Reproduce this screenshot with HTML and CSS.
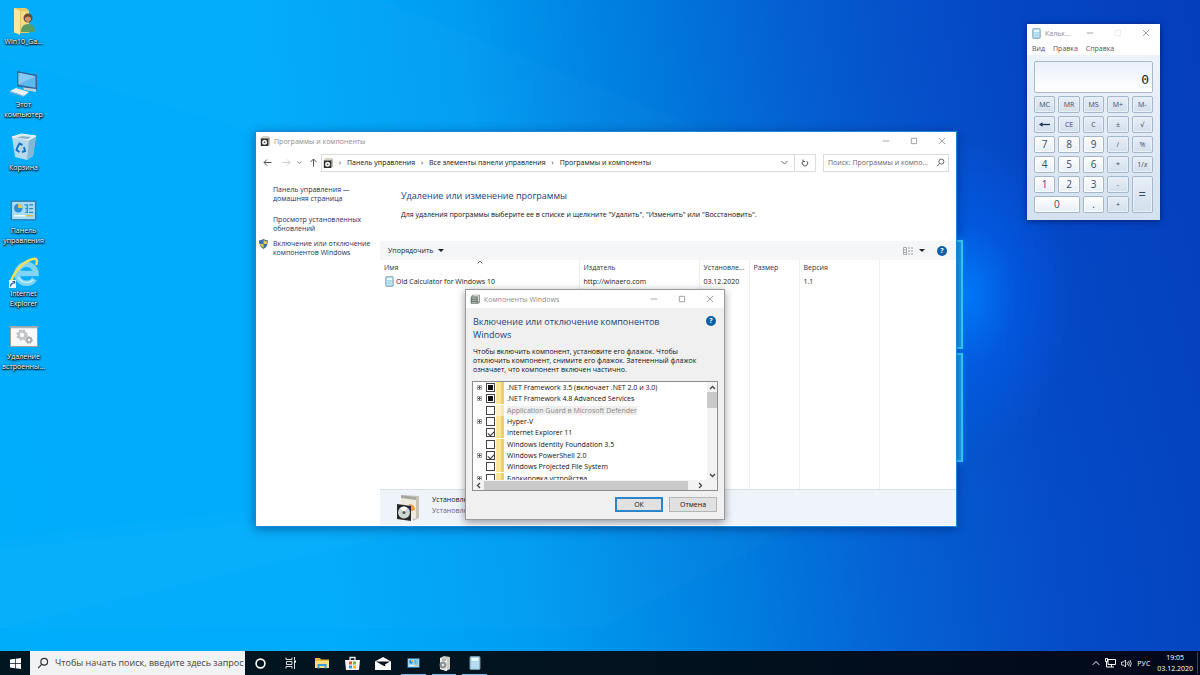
FILE: index.html
```html
<!DOCTYPE html>
<html lang="ru">
<head>
<meta charset="utf-8">
<title>Рабочий стол</title>
<link rel="stylesheet" href="styles.css">
</head>
<body>
<svg class="symbols" aria-hidden="true">
  <symbol id="min" viewBox="0 0 9 9"><path d="M1 4.500h7" fill="none" stroke="#999"/></symbol>
  <symbol id="max" viewBox="0 0 9 9"><path d="M1.500 1.500h6v6h-6z" fill="none" stroke="#999"/></symbol>
  <symbol id="close" viewBox="0 0 9 9"><path d="M1 1l7 7M8 1l-7 7" fill="none" stroke="#999"/></symbol>
  <symbol id="box" viewBox="0 0 12 12">
    <path d="M1 2l3-2h7v9l-2 2H1z" fill="#d8d3c5"/><path d="M1 3h9v9H1z" fill="#2d2d2d"/><path d="M10 3l1.500-2v9L10 12z" fill="#8d8a80"/>
    <circle cx="5.500" cy="7.500" r="3" fill="#f0f0f0"/><circle cx="5.500" cy="7.500" r="1" fill="#333"/>
  </symbol>
  <symbol id="calc" viewBox="0 0 12 14">
    <rect x="1" y="0.500" width="10" height="13" rx="1" fill="#a9d8ec" stroke="#7296a8"/>
    <rect x="2.500" y="2" width="7" height="3" fill="#eafaff"/>
    <path d="M2.500 7h7M2.500 9h7M2.500 11h7" stroke="#d2eef8" stroke-dasharray="1.500 1.200"/>
  </symbol>
  <symbol id="panel" viewBox="0 0 28 22">
    <rect x="0.500" y="0.500" width="27" height="21" fill="#2c80b4"/><rect x="2" y="2" width="24" height="18" fill="#a7dcf7"/>
    <circle cx="8.500" cy="8.500" r="4.500" fill="#2e8fd8"/><path d="M8.500 8.500V4A4.500 4.500 0 0 1 13 8.500z" fill="#f6c945"/>
    <path d="M15 5h3v8h-2M18 9h-2M20 5h4M20 9h4M20 13h4" fill="none" stroke="#2a86c9" stroke-width="1.300"/><path d="M4 16.500h12" stroke="#fff" stroke-width="1.500"/><path d="M17 16.500h7" stroke="#e0b34b" stroke-width="1.500"/>
  </symbol>
  <symbol id="search" viewBox="0 0 10 10"><circle cx="6" cy="4" r="2.800" fill="none" stroke="currentColor"/><path d="M4 6L1 9.200" stroke="currentColor"/></symbol>
  <symbol id="features" viewBox="0 0 12 12">
    <path d="M1 3l2-2h9v9l-2 2H1z" fill="#9a9f98"/><path d="M1 4h8v7H1z" fill="#5d6b64"/><path d="M2 5h6M2 7.500h6M2 10h6" stroke="#d5dbd4"/><path d="M4 2h6v7" fill="none" stroke="#e8e8e0"/>
  </symbol>
</svg>

<main class="desktop">
  <svg class="wallpaper" viewBox="0 0 1200 675" preserveAspectRatio="none" aria-hidden="true">
    <path d="M380 0L960 240V350L0 60V0z" fill="#fff" opacity=".015"/>
    <path d="M960 440L520 525L0 650V560z" fill="#fff" opacity=".015"/>
    <path d="M960 460L600 651H0V570z" fill="#fff" opacity=".015"/>
  </svg>
  <div class="logo-light"><i></i><i></i></div>

  <nav class="shortcuts" aria-label="Ярлыки">
    <a href="#user" class="shortcut">
      <svg width="26" height="30" viewBox="0 0 26 30"><path d="M3 2h12l3 3v22H3z" fill="#e8c765"/><path d="M3 2l6 3v24l-6-3z" fill="#fbe7a0"/><path d="M10 5h8v20h-8z" fill="#f7dc83"/><circle cx="17" cy="12" r="4.500" fill="#6b4a35"/><path d="M14 12q3-3 6 0v2q-3 4-6 0z" fill="#c99571"/><path d="M10 26q0-8 7-8t7 8z" fill="#5b9b66"/></svg>
      <span>Win10_Ga...</span></a>
    <a href="#pc" class="shortcut">
      <svg width="28" height="28" viewBox="0 0 28 28"><path d="M7 1l20 4v15L7 16z" fill="#33658f"/><path d="M8.500 2.800l17 3.500v11.500l-17-3z" fill="#5bb7ed"/><path d="M8.500 2.800l17 3.500-17 8z" fill="#83cdf5"/><path d="M13 17.500l13 1.500v3l-12-2z" fill="#bcd2df"/><path d="M0 21l6-3 13 4-5 4z" fill="#e9f1f6"/><path d="M0 21l14 5v1L0 22.500z" fill="#8fb3c9"/></svg>
      <span>Этот<br>компьютер</span></a>
    <a href="#bin" class="shortcut">
      <svg width="26" height="28" viewBox="0 0 26 28"><path d="M1 4l17 3 7-4-3 20-6 4-12-3z" fill="#b5d9ec"/><path d="M18 7l7-4-3 20-6 4z" fill="#82b8d6"/><path d="M1 4l9-3 15 2-7 4z" fill="#d8edf7" stroke="#eef8fc"/><path d="M5 5l6-2 9 1-3 2z" fill="#8fb4c8"/><path d="M6.500 14l2-3.500 3 1.500M13 14l1 4-3 1M8.500 19l-3-2 1-3" fill="none" stroke="#1772bd" stroke-width="2"/></svg>
      <span>Корзина</span></a>
    <a href="#panel" class="shortcut">
      <svg width="27" height="21"><use href="#panel"/></svg>
      <span>Панель<br>управления</span></a>
    <a href="#ie" class="shortcut">
      <svg width="32" height="32" viewBox="0 0 32 32"><path d="M26.500 22A9.500 9.500 0 1 1 28 16.500H11" fill="none" stroke="#7fd4f7" stroke-width="5.500"/><path d="M25 23A9.500 9.500 0 0 1 10 20" fill="none" stroke="#c4effc" stroke-width="1.500"/><path d="M4 29C-1 26 11 5 25 2q6-1 3 6" fill="none" stroke="#f3e05a" stroke-width="2.500"/><path d="M1 23h7v8H1z" fill="#f7f7f7"/><path d="M2.500 29.500q0-3 3-3.500" fill="none" stroke="#205a9e" stroke-width="1.200"/><path d="M4 24h3.200v3.200z" fill="#205a9e"/></svg>
      <span>Internet<br>Explorer</span></a>
    <a href="#script" class="shortcut">
      <svg width="28" height="21" viewBox="0 0 28 21"><rect x="0.500" y="0.500" width="27" height="20" fill="#f8f8f8" stroke="#9aa2a8"/><path d="M1 1.500h26" stroke="#aab4bc" stroke-width="1.500"/><circle cx="12" cy="9" r="3.500" fill="none" stroke="#c2c4c6" stroke-width="2.500"/><circle cx="12" cy="9" r="5" fill="none" stroke="#b8babc" stroke-width="1.300" stroke-dasharray="2 2"/><circle cx="19" cy="14" r="2.200" fill="none" stroke="#aeb0b2" stroke-width="2"/><circle cx="19" cy="14" r="3.500" fill="none" stroke="#aeb0b2" stroke-dasharray="1.500 1.500"/></svg>
      <span>Удаление<br>встроенны...</span></a>
  </nav>

  <section class="window programs" aria-label="Программы и компоненты">
    <header class="titlebar">
      <svg width="10" height="10"><use href="#box"/></svg><h1>Программы и компоненты</h1>
      <div class="controls">
        <button aria-label="Свернуть"><svg width="8" height="8"><use href="#min"/></svg></button>
        <button aria-label="Развернуть"><svg width="8" height="8"><use href="#max"/></svg></button>
        <button aria-label="Закрыть"><svg width="8" height="8"><use href="#close"/></svg></button>
      </div>
    </header>
    <div class="navigation">
      <div class="history">
        <button aria-label="Назад"><svg width="9" height="9" viewBox="0 0 9 9"><path d="M8.500 4.500H1M4 1.500l-3 3 3 3" fill="none" stroke="#555"/></svg></button>
        <button aria-label="Вперед"><svg width="9" height="9" viewBox="0 0 9 9"><path d="M.500 4.500H8M5 1.500l3 3-3 3" fill="none" stroke="#ccc"/></svg></button>
        <button aria-label="Журнал"><svg width="5" height="5" viewBox="0 0 5 5"><path d="M.500 1.500l2 2 2-2" fill="none" stroke="#888"/></svg></button>
        <button aria-label="Вверх"><svg width="9" height="9" viewBox="0 0 9 9"><path d="M4.500 8.500V1M1.500 4l3-3 3 3" fill="none" stroke="#555"/></svg></button>
      </div>
      <div class="address">
        <svg width="10" height="10"><use href="#box"/></svg>
        <b>›</b><a href="#cp">Панель управления</a><b>›</b><a href="#all">Все элементы панели управления</a><b>›</b><a href="#programs">Программы и компоненты</a>
        <button class="drop" aria-label="Адреса"><svg width="7" height="5" viewBox="0 0 7 5"><path d="M.500 1l3 3 3-3" fill="none" stroke="#666"/></svg></button>
        <button class="refresh" aria-label="Обновить"><svg width="8" height="8" viewBox="0 0 8 8"><path d="M5.500 2A2.700 2.700 0 1 1 2.500 2M2 .500v2h2" fill="none" stroke="#555"/></svg></button>
      </div>
      <label class="find"><input type="text" aria-label="Поиск" placeholder="Поиск: Программы и компо..."><svg width="9" height="9"><use href="#search"/></svg></label>
    </div>
    <div class="body">
      <aside class="tasks">
        <a href="#home">Панель управления —<br>домашняя страница</a>
        <a href="#updates">Просмотр установленных<br>обновлений</a>
        <a href="#features" class="shielded"><svg width="9" height="10" viewBox="0 0 10 11"><path d="M5 0q2 1.500 5 1.500Q10 8 5 11 0 8 0 1.500 3 1.500 5 0z" fill="#37678f"/><path d="M5 1v4.500H1q-.500-1-.300-3Q3 2.500 5 1zM5 5.500h4Q8 8.500 5 10z" fill="#2f76b5"/><path d="M5 1q2 1.500 4.200 1.500 0 2-.200 3H5zM1 5.500h4V10Q2 8.500 1 5.500z" fill="#f1c84b"/></svg>Включение или отключение<br>компонентов Windows</a>
      </aside>
      <div class="content">
        <div class="intro">
          <h2>Удаление или изменение программы</h2>
          <p>Для удаления программы выберите ее в списке и щелкните "Удалить", "Изменить" или "Восстановить".</p>
        </div>
        <div class="toolbar">
          <button>Упорядочить <i class="caret"></i></button>
          <div class="view-tools">
            <button aria-label="Вид"><svg width="11" height="8" viewBox="0 0 11 8"><path d="M.500 .500h3v7h-3zM.500 3h3M.500 5.500h3" fill="none" stroke="#aaa"/><path d="M5 1h6M5 4h6M5 7h6" stroke="#999" stroke-dasharray="2 1"/></svg><i class="caret"></i></button>
            <button class="help" aria-label="Справка">?</button>
          </div>
        </div>
        <table class="list">
          <colgroup><col class="c-name"><col class="c-pub"><col class="c-date"><col class="c-size"><col class="c-ver"><col></colgroup>
          <thead><tr><th class="sorted">Имя<svg width="6" height="4" viewBox="0 0 6 4"><path d="M.500 3.500L3 1l2.500 2.500" fill="none" stroke="#777"/></svg></th><th>Издатель</th><th>Установле...</th><th>Размер</th><th>Версия</th><th></th></tr></thead>
          <tbody>
            <tr><td><span class="program"><svg width="9" height="11"><use href="#calc"/></svg>Old Calculator for Windows 10</span></td><td>http://winaero.com</td><td>03.12.2020</td><td></td><td>1.1</td><td></td></tr>
            <tr class="rest"><td></td><td></td><td></td><td></td><td></td><td></td></tr>
          </tbody>
        </table>
        <div class="details">
          <svg width="26" height="29" viewBox="0 0 26 29"><path d="M6 2l18 1v22l-6 3V6z" fill="#c5c1b4"/><path d="M6 2l15 2v22L6 22z" fill="#eeeade"/><path d="M6 2l15 2v3L6 5z" fill="#a5a7a2"/><path d="M14 11q6 0 6 6l-6 2z" fill="#e8a33d"/><path d="M2 11l14 2v15L2 26z" fill="#282828"/><circle cx="9" cy="19.500" r="6" fill="#cbd7cf"/><path d="M9 19.500l-4-4.500q4-3 7 0z" fill="#fff"/><circle cx="9" cy="19.500" r="1.500" fill="#555"/></svg>
          <div><strong>Установленные программы</strong><span>Установлено программ: 1</span></div>
        </div>
      </div>
    </div>
  </section>

  <section class="window features" role="dialog" aria-label="Компоненты Windows">
    <header class="titlebar">
      <svg width="10" height="10"><use href="#features"/></svg><h1>Компоненты Windows</h1>
      <div class="controls">
        <button aria-label="Свернуть"><svg width="8" height="8"><use href="#min"/></svg></button>
        <button aria-label="Развернуть"><svg width="8" height="8"><use href="#max"/></svg></button>
        <button aria-label="Закрыть"><svg width="8" height="8"><use href="#close"/></svg></button>
      </div>
    </header>
    <div class="dialog-body">
      <div class="dialog-head"><h2>Включение или отключение компонентов Windows</h2><button class="help" aria-label="Справка">?</button></div>
      <p>Чтобы включить компонент, установите его флажок. Чтобы отключить компонент, снимите его флажок. Затененный флажок означает, что компонент включен частично.</p>
      <div class="tree">
        <div class="tree-view">
          <ul>
            <li><button class="plus" aria-label="Раскрыть"></button><label><input type="checkbox" class="partial"><i class="folder"></i>.NET Framework 3.5 (включает .NET 2.0 и 3.0)</label></li>
            <li><button class="plus" aria-label="Раскрыть"></button><label><input type="checkbox" class="partial"><i class="folder"></i>.NET Framework 4.8 Advanced Services</label></li>
            <li class="off"><label><input type="checkbox" disabled><i class="folder"></i><em>Application Guard в Microsoft Defender</em></label></li>
            <li><button class="plus" aria-label="Раскрыть"></button><label><input type="checkbox"><i class="folder"></i>Hyper-V</label></li>
            <li><label><input type="checkbox" checked><i class="folder"></i>Internet Explorer 11</label></li>
            <li><label><input type="checkbox"><i class="folder"></i>Windows Identity Foundation 3.5</label></li>
            <li><button class="plus" aria-label="Раскрыть"></button><label><input type="checkbox" checked><i class="folder"></i>Windows PowerShell 2.0</label></li>
            <li><label><input type="checkbox"><i class="folder"></i>Windows Projected File System</label></li>
            <li><button class="plus" aria-label="Раскрыть"></button><label><input type="checkbox"><i class="folder"></i>Блокировка устройства</label></li>
          </ul>
        </div>
        <div class="vbar">
          <svg width="7" height="5" viewBox="0 0 7 5"><path d="M1 4l2.500-2.500L6 4" fill="none" stroke="#444" stroke-width="1.300"/></svg><i></i>
          <svg width="7" height="5" viewBox="0 0 7 5"><path d="M1 1l2.500 2.500L6 1" fill="none" stroke="#444" stroke-width="1.300"/></svg>
        </div>
        <div class="hbar">
          <svg width="5" height="7" viewBox="0 0 5 7"><path d="M4 1L1.500 3.500 4 6" fill="none" stroke="#444" stroke-width="1.300"/></svg><i></i>
          <svg width="5" height="7" viewBox="0 0 5 7"><path d="M1 1l2.500 2.500L1 6" fill="none" stroke="#444" stroke-width="1.300"/></svg>
        </div>
      </div>
      <div class="actions"><button class="primary">ОК</button><button>Отмена</button></div>
    </div>
  </section>

  <section class="window calculator" aria-label="Калькулятор">
    <header class="titlebar">
      <svg width="9" height="11"><use href="#calc"/></svg><h1>Кальк...</h1>
      <div class="controls">
        <button aria-label="Свернуть"><svg width="8" height="8"><use href="#min"/></svg></button>
        <button aria-label="Развернуть" class="faint"><svg width="8" height="8"><use href="#max"/></svg></button>
        <button aria-label="Закрыть"><svg width="8" height="8"><use href="#close"/></svg></button>
      </div>
    </header>
    <nav class="menu"><button>Вид</button><button>Правка</button><button>Справка</button></nav>
    <div class="calc-body">
      <output class="display">0</output>
      <div class="keys">
        <button class="mem">MC</button><button class="mem">MR</button><button class="mem">MS</button><button class="mem">M+</button><button class="mem">M-</button>
        <button class="op" aria-label="Стереть"><svg width="11" height="5" viewBox="0 0 11 5"><path d="M11 2.500H2" stroke="#1c3154" stroke-width="1.300"/><path d="M0 2.500L3.500 .300v4.400z" fill="#1c3154"/></svg></button><button class="op">CE</button><button class="op">C</button><button class="op">±</button><button class="op">√</button>
        <button>7</button><button>8</button><button>9</button><button class="op">/</button><button class="op">%</button>
        <button>4</button><button>5</button><button>6</button><button class="op">*</button><button class="op">1/<i>x</i></button>
        <button>1</button><button>2</button><button>3</button><button class="op">-</button><button class="op equals">=</button>
        <button class="zero">0</button><button>.</button><button class="op">+</button>
      </div>
    </div>
  </section>
</main>

<footer class="taskbar">
  <button class="start" aria-label="Пуск"><svg width="11" height="11" viewBox="0 0 11 11"><path d="M0 1.500L5 .800v4.400H0zM5.700 .700L11 0v5.200H5.700zM0 5.900h5v4.400l-5-.700zM5.700 5.900H11V11l-5.300-.700z" fill="#fff"/></svg></button>
  <label class="taskbar-search"><svg width="12" height="12"><use href="#search"/></svg><input type="text" aria-label="Поиск в Windows" placeholder="Чтобы начать поиск, введите здесь запрос"></label>
  <nav class="apps">
    <button aria-label="Кортана"><svg width="11" height="11" viewBox="0 0 11 11"><circle cx="5.500" cy="5.500" r="4.400" fill="none" stroke="#fff" stroke-width="1.600"/></svg></button>
    <button aria-label="Представление задач"><svg width="12" height="12" viewBox="0 0 12 12"><path d="M1 .500v2h6v-2M1.500 4.500h5.500v3H1.500zM1 11.500v-2h6v2M9.500 0v3M9.500 5v7" fill="none" stroke="#ddd"/><path d="M9 3.500h2v2H9z" fill="#fff"/></svg></button>
    <button aria-label="Проводник"><svg width="14" height="12" viewBox="0 0 14 12"><path d="M0 1h5l1 1.500h8V11H0z" fill="#e9b93c"/><path d="M0 4h14v7H0z" fill="#fbdf83"/><path d="M2.500 7h9v4.500H9.500V9h-5v2.500h-2z" fill="#3c9bd8"/></svg></button>
    <button aria-label="Магазин"><svg width="15" height="15" viewBox="0 0 15 15"><path d="M5 4V1.500h5V4" fill="none" stroke="#eee" stroke-width="1.300"/><path d="M0 4h15l-1 10H1z" fill="#f6f6f6"/><path d="M4 5.500h3v3H4z" fill="#e65a35"/><path d="M8 5.500h3v3H8z" fill="#7bb832"/><path d="M4 9.500h3v3H4z" fill="#2f9fe0"/><path d="M8 9.500h3v3H8z" fill="#f3b925"/></svg></button>
    <button aria-label="Почта"><svg width="16" height="13" viewBox="0 0 16 13"><path d="M0 4.500L8 0l8 4.500V13H0z" fill="#fff"/><path d="M1 4.500h14L10 7.500l.500 2L8 8.500z" fill="#07131d"/></svg></button>
    <button class="open" aria-label="Панель управления"><svg width="13" height="10"><use href="#panel"/></svg></button>
    <button class="open" aria-label="Компоненты Windows"><svg width="13" height="15" viewBox="0 0 13 15"><path d="M2 2l4-2 6 1v12l-4 2-6-2z" fill="#c9cac6"/><path d="M2 2l7 1.500V15l-7-2z" fill="#eee"/><circle cx="5" cy="9" r="3.500" fill="#8d9292"/><circle cx="5" cy="9" r="1.200" fill="#eee"/><path d="M4 4h4" stroke="#777"/></svg></button>
    <button class="open" aria-label="Калькулятор"><svg width="12" height="14"><use href="#calc"/></svg></button>
  </nav>
  <div class="tray">
    <button aria-label="Скрытые значки"><svg width="8" height="6" viewBox="0 0 8 6"><path d="M.800 4.800L4 1.500l3.200 3.300" fill="none" stroke="#fff"/></svg></button>
    <button aria-label="Сеть"><svg width="11" height="10" viewBox="0 0 11 10"><path d="M3 1.500h7.500v5H3zM4 9h5M6.500 6.500V9M.500 .500h2v3h-2zM1.500 3.500V9H4" fill="none" stroke="#fff"/></svg></button>
    <button aria-label="Звук"><svg width="11" height="9" viewBox="0 0 11 9"><path d="M.500 3h2l2-2v7l-2-2h-2zM6 3q1 1.500 0 3M7.500 2q1.700 2.500 0 5M9 1q2.500 3.500 0 7" fill="none" stroke="#fff" stroke-width=".800"/></svg></button>
    <button>РУС</button>
    <time><span>19:05</span><span>03.12.2020</span></time>
  </div>
</footer>
</body>
</html>
```
FILE: styles.css
```css
* { box-sizing: border-box; }
body {
  margin: 0;
  height: 100vh;
  display: flex;
  flex-direction: column;
  overflow: hidden;
  font: 7px/9px "Open Sans", "Noto Sans", sans-serif;
  color: #222;
}
button, input { font: inherit; color: inherit; margin: 0; padding: 0; border: 0; background: none; }
button { display: flex; align-items: center; justify-content: center; }
h1, h2, p, ul { margin: 0; padding: 0; font-weight: 400; list-style: none; }
a { color: inherit; text-decoration: none; }
svg { flex: none; display: block; }
.symbols { position: absolute; width: 0; height: 0; }

.desktop {
  flex: 1;
  position: relative;
  background:
    radial-gradient(ellipse 110px 160px at 965px 295px, rgba(0, 125, 255, .9), rgba(0, 100, 245, .45) 45%, transparent),
    radial-gradient(ellipse 750px 520px at 100% 0, rgba(5, 60, 190, .4), transparent),
    linear-gradient(83deg, #00adfb 0%, #00acfb 26%, #009df2 42%, #0080e0 57%, #0562d4 70%, #054bc8 84%, #0440bc 100%);
}
.wallpaper { position: absolute; inset: 0; width: 100%; height: 100%; }
.logo-light { position: absolute; left: 900px; top: 240px; width: 63px; display: grid; gap: 4px; }
.logo-light i { height: 109px; border: 2px solid #35d2f8; background: #1a9cea; box-shadow: 0 0 6px #0b8cff; }

.shortcuts { position: absolute; left: 0; top: 5px; width: 47px; }
.shortcut { height: 63px; display: grid; grid-template-rows: 32px auto; justify-items: center; align-items: center; align-content: start; }
.shortcut span { color: #fff; text-align: center; line-height: 10px; white-space: nowrap; text-shadow: 0 1px 1px #000, 0 0 2px #000, 1px 1px 2px #000; }

.window { position: absolute; display: flex; flex-direction: column; background: #fff; }
.titlebar { height: 18px; flex: none; display: flex; align-items: center; gap: 4px; padding-left: 4px; color: #8c8c8c; }
.titlebar h1 { font-size: 7px; white-space: nowrap; }
.controls { margin-left: auto; display: flex; }
.controls button { width: 28px; height: 18px; }

.programs { left: 255px; top: 131px; width: 702px; min-height: 396px; border: 1px solid #1b87d6; box-shadow: 0 2px 10px rgba(0, 20, 80, .45); padding-bottom: 1px; }
.navigation { display: flex; align-items: center; height: 25px; padding-right: 7px; }
.history { width: 65px; display: grid; grid-template-columns: 22px 16px 11px 16px; }
.address { flex: 1; display: flex; align-items: center; height: 18px; border: 1px solid #dcdcdc; padding-left: 1px; margin-right: 7px; color: #111; white-space: nowrap; }
.address b { font-weight: 400; width: 14px; text-align: center; }
.address .drop { margin-left: auto; width: 20px; }
.address .refresh { width: 21px; align-self: stretch; border-left: 1px solid #dcdcdc; }
.find { width: 126px; height: 18px; display: flex; align-items: center; border: 1px solid #dcdcdc; padding: 0 3px 0 4px; color: #555; }
.find input { flex: 1; min-width: 0; }
input::placeholder { color: #666; opacity: 1; }
.body { flex: 1; display: grid; grid-template-columns: 124px 1fr; }
.tasks { padding: 10px 0 0 17px; color: #23325c; white-space: nowrap; }
.tasks a { display: block; margin-bottom: 12px; }
.tasks a:nth-child(2) { margin-bottom: 6px; }
.shielded { position: relative; }
.shielded svg { position: absolute; left: -14px; top: 0; }
.content { display: flex; flex-direction: column; }
.intro { height: 66px; padding: 14px 0 0 21px; color: #111; }
h2 { font-size: 9px; line-height: 13px; color: #1c3f7c; }
.intro p { margin-top: 8px; }
.toolbar { height: 19px; display: flex; align-items: center; justify-content: space-between; background: #f5f6f7; padding: 0 9px 0 8px; }
.toolbar button { gap: 5px; }
.caret { border: 3px solid transparent; border-top-color: #222; border-bottom: 0; }
.view-tools { display: flex; gap: 12px; }
.toolbar .help { gap: 0; }
.help { width: 10px; height: 10px; border-radius: 50%; background: #0b5fa8; color: #fff; font-weight: 700; line-height: 10px; flex: none; }
.list { flex: 1; width: 100%; height: 230px; table-layout: fixed; border-collapse: collapse; }
.c-name { width: 199px; } .c-pub { width: 120px; } .c-date, .c-size { width: 50px; } .c-ver { width: 80px; }
.list th, .list td { height: 13px; padding: 0 0 0 4px; font-weight: 400; text-align: left; border-right: 1px solid #efefef; white-space: nowrap; }
.list th { height: 15px; color: #29344d; }
.list th:last-child, .list td:last-child { border: 0; }
.list .rest td { height: auto; }
.sorted { position: relative; }
.sorted svg { position: absolute; left: 97px; top: 0; }
.program { display: flex; align-items: center; gap: 2px; padding-left: 1px; }
.details { height: 36px; flex: none; display: flex; align-items: center; gap: 11px; padding-left: 15px; background: #eff3fa; border-top: 1px solid #d8e0ea; }
.details strong, .details span { display: block; font-weight: 400; line-height: 11px; }
.details div { padding-bottom: 5px; }
.details span { color: #667; }

.features { left: 465px; top: 289px; width: 260px; min-height: 231px; border: 1px solid #9a9a9a; background: #f0f0f0; box-shadow: 0 2px 8px rgba(0, 0, 0, .4); }
.features .titlebar { background: #fff; }
.dialog-body { padding: 7px 6px 0; color: #111; }
.dialog-head { display: flex; justify-content: space-between; align-items: flex-start; padding: 0 2px 0 1px; }
.dialog-head h2 { width: 200px; }
.dialog-head .help { margin-top: 1px; }
.features p { margin: 6px 1px 7px; width: 238px; }
.tree { display: grid; grid-template: 98px 10px / 1fr 10px; border: 1px solid #8a8d92; background: #fff; }
.tree-view { overflow: hidden; }
.tree ul { height: 102px; display: grid; grid-auto-rows: 1fr; }
.tree li { display: grid; grid-template-columns: 12px 1fr; align-items: center; white-space: nowrap; }
.tree label { grid-column: 2; display: flex; align-items: center; }
.plus { width: 5px; height: 5px; margin-left: 4px; border: 1px solid #aaa; background: linear-gradient(#555, #555) center / 3px 1px no-repeat, linear-gradient(#555, #555) center / 1px 3px no-repeat; }
.tree input { appearance: none; width: 9px; height: 9px; border: 1px solid #444; background: #fff; margin-left: 1px; display: grid; place-items: center; }
.tree .partial::before { content: ""; width: 5px; height: 5px; background: #111; }
.tree input:checked::before { content: ""; width: 5px; height: 3px; border: solid #333; border-width: 0 0 1px 1px; transform: rotate(-45deg); }
.folder { width: 8px; height: 11px; margin: 0 3px 0 1px; background: linear-gradient(90deg, #fbe699 60%, #efcf6d 60%); }
.off { color: #888; }
.off .folder { opacity: .5; }
.tree em { font-style: normal; background: #efefef; }
.vbar, .hbar { background: #f3f3f3; display: flex; align-items: center; }
.vbar { flex-direction: column; padding: 3px 0 2px; gap: 2px; }
.vbar i { width: 10px; height: 16px; background: #c9c9c9; margin-bottom: auto; }
.hbar { grid-column: 1 / 3; padding: 0 14px 0 3px; }
.hbar i { flex: 1; height: 9px; margin: 0 10px 0 3px; background: #c9c9c9; }
.actions { display: flex; justify-content: flex-end; gap: 6px; padding: 6px 1px 6px 0; }
.actions button { width: 48px; height: 15px; border: 1px solid #b5b5b5; background: #e1e1e1; }
.actions .primary { border: 2px solid #2a85cb; }

.calculator { right: 40px; top: 24px; width: 133px; box-shadow: 0 1px 6px rgba(0, 10, 60, .6); }
.calculator .titlebar { padding-left: 5px; }
.faint { opacity: .2; }
.menu { display: flex; gap: 8px; height: 13px; padding-left: 5px; color: #555; }
.calc-body { padding: 6px 7px 7px; background: linear-gradient(#eef3fa, #d5e1ef); }
.display { display: flex; height: 32px; align-items: flex-end; justify-content: flex-end; padding: 0 3px 5px; border: 1px solid #a9b8ca; border-radius: 2px; background: linear-gradient(#eaf0fb, #fff); font: 13px/14px "DejaVu Sans Mono", monospace; }
.keys { margin-top: 3px; display: grid; grid-template-columns: repeat(5, 1fr); grid-auto-rows: 17px; gap: 3px; }
.keys button { border: 1px solid #a6b6ca; border-radius: 2px; background: linear-gradient(#fff, #e6eef7); font-size: 10px; color: #3a4a64; box-shadow: inset 0 0 0 1px #fff; min-width: 0; }
.keys .op, .keys .mem { background: linear-gradient(#e7eef7, #d3dfec); font-size: 7px; box-shadow: inset 0 0 0 1px #e8f0f8; }
.keys .equals { grid-row: span 2; font-size: 13px; }
.keys .zero { grid-column: span 2; }

.taskbar { height: 24px; flex: none; display: flex; background: linear-gradient(90deg, #001620, #02131f 50%, #02081b); color: #fff; }
.start { width: 30px; }
.taskbar-search { width: 215px; display: flex; align-items: center; gap: 6px; padding-left: 7px; background: #f1f2f3; color: #333; }
.taskbar-search input { flex: 1; min-width: 0; font-size: 9px; line-height: 12px; }
.taskbar-search input::placeholder { color: #444; }
.apps { width: 245px; display: grid; grid-template-columns: repeat(8, 1fr); }
.apps .open { position: relative; }
.apps .open::after { content: ""; position: absolute; left: 3px; right: 3px; bottom: 0; height: 1px; background: #76b9ed; }
.tray { margin-left: auto; display: flex; align-items: center; gap: 5px; padding-right: 2px; }
.tray time { display: grid; text-align: center; line-height: 11px; border-right: 1px solid #3a4450; padding: 0 4px 0 2px; }
```
